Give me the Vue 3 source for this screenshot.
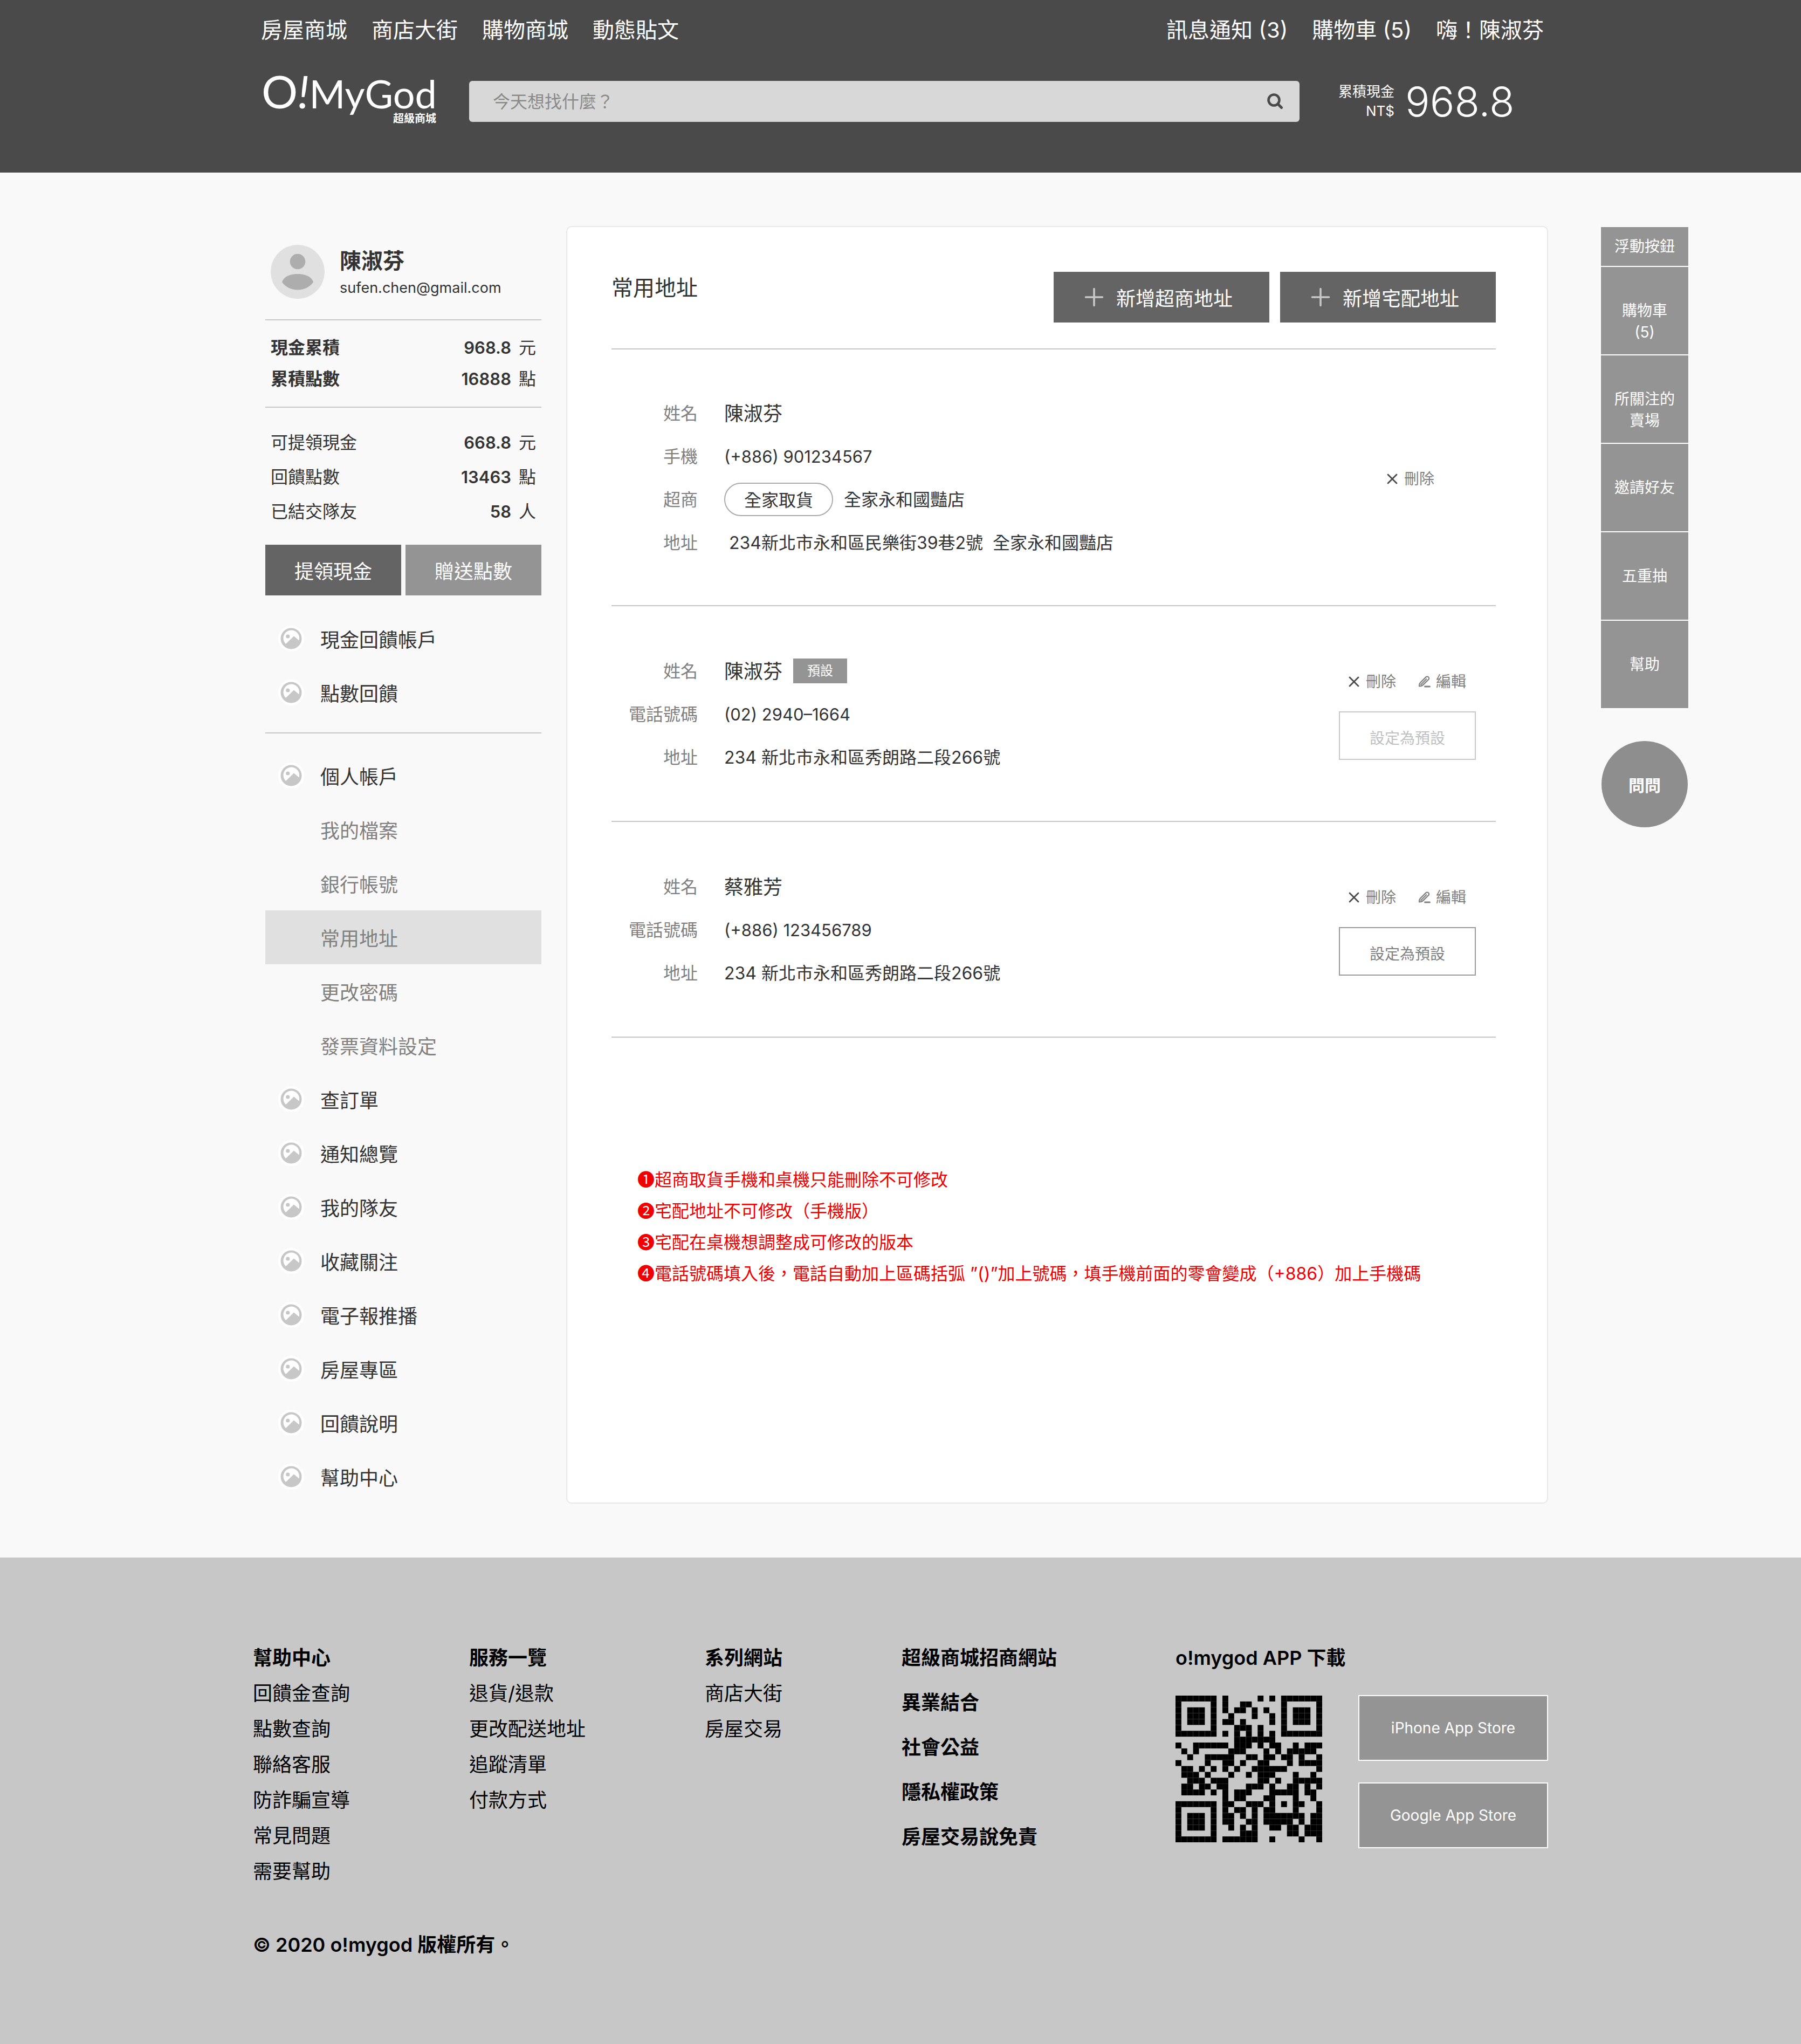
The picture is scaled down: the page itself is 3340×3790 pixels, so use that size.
<script setup>
const mainNav = ['房屋商城', '商店大街', '購物商城', '動態貼文']
const userNav = ['訊息通知 (3)', '購物車 (5)', '嗨！陳淑芬']

const totals = [
  { label: '現金累積', value: '968.8', unit: '元' },
  { label: '累積點數', value: '16888', unit: '點' },
]
const balances = [
  { label: '可提領現金', value: '668.8', unit: '元' },
  { label: '回饋點數', value: '13463', unit: '點' },
  { label: '已結交隊友', value: '58', unit: '人' },
]

const rewardMenu = ['現金回饋帳戶', '點數回饋']
const accountMenu = [
  { label: '個人帳戶' },
  { label: '我的檔案', sub: true },
  { label: '銀行帳號', sub: true },
  { label: '常用地址', sub: true, active: true },
  { label: '更改密碼', sub: true },
  { label: '發票資料設定', sub: true },
  { label: '查訂單' },
  { label: '通知總覽' },
  { label: '我的隊友' },
  { label: '收藏關注' },
  { label: '電子報推播' },
  { label: '房屋專區' },
  { label: '回饋說明' },
  { label: '幫助中心' },
]

const addresses = [
  {
    store: true,
    rows: [
      { label: '姓名', value: '陳淑芬', kind: 'name' },
      { label: '手機', value: '(+886) 901234567', kind: 'phone' },
      { label: '超商', pill: '全家取貨', value: '全家永和國豔店' },
      { label: '地址', value: ' 234新北市永和區民樂街39巷2號  全家永和國豔店' },
    ],
  },
  {
    isDefault: true,
    rows: [
      { label: '姓名', value: '陳淑芬', kind: 'name', tag: '預設' },
      { label: '電話號碼', value: '(02) 2940–1664', kind: 'phone' },
      { label: '地址', value: '234 新北市永和區秀朗路二段266號' },
    ],
  },
  {
    rows: [
      { label: '姓名', value: '蔡雅芳', kind: 'name' },
      { label: '電話號碼', value: '(+886) 123456789', kind: 'phone' },
      { label: '地址', value: '234 新北市永和區秀朗路二段266號' },
    ],
  },
]

const notes = [
  ['❶', '超商取貨手機和桌機只能刪除不可修改'],
  ['❷', '宅配地址不可修改（手機版）'],
  ['❸', '宅配在桌機想調整成可修改的版本'],
  ['❹', '電話號碼填入後，電話自動加上區碼括弧 ”()”加上號碼，填手機前面的零會變成（+886）加上手機碼'],
]

const rail = [['購物車', '(5)'], ['所關注的', '賣場'], ['邀請好友'], ['五重抽'], ['幫助']]

const footerLists = [
  { title: '幫助中心', items: ['回饋金查詢', '點數查詢', '聯絡客服', '防詐騙宣導', '常見問題', '需要幫助'] },
  { title: '服務一覽', items: ['退貨/退款', '更改配送地址', '追蹤清單', '付款方式'] },
  { title: '系列網站', items: ['商店大街', '房屋交易'] },
]
const footerLinks = ['超級商城招商網站', '異業結合', '社會公益', '隱私權政策', '房屋交易說免責']

// Dark modules of each QR row, written as column numbers and ranges
const qrRows = [
  '0-6 8 14 16 18-24',
  '0 6 8 11-12 18 24',
  '0 2-4 6 8 10-11 13 15 18 20-22 24',
  '0 2-4 6 9 13 16 18 20-22 24',
  '0 2-4 6 8-9 11 16 18 20-22 24',
  '0 6 10-12 14 18 24',
  '0-6 8 10 12 14 16 18-24',
  '10-16',
  '0 3-8 10-12 14 16-17 20 22-24',
  '1 3 9-11 15 17 19-23',
  '2 5-9 12-13 15-16 18-19 21 24',
  '0 5 8-9 11 14-15 19 21-24',
  '1-2 4 6 8 10 13-18 24',
  '1-3 5 9 12 14-16 20 23',
  '2-4 6-8 14-15 17 20-24',
  '1-2 4-5 7-8 12-14 16 19-20 22 24',
  '1-4 6 8 10-12 16-20 22-23',
  '8 10-11 15-16 20 23',
  '0-6 8-9 12-14 16 18 20-21 24',
  '0 6 8 10-11 13 15-16 20 24',
  '0 2-4 6 8-9 11 13 15-21 23-24',
  '0 2-4 6 8-9 12-13 15-19 21 23-24',
  '0 2-4 6 9 11 13 16-17 19-20 22-24',
  '0 6 11-13 19-20 22-24',
  '0-6 8-13 16 21 24',
]
const qrCells = qrRows.flatMap((row, y) =>
  row.split(' ').flatMap((run) => {
    const [from, to = from] = run.split('-').map(Number)
    return Array.from({ length: to - from + 1 }, (_, i) => ({ x: from + i, y }))
  }),
)
</script>

<template>
  <div class="page" lang="zh-Hant">
    <header class="header">
      <div class="container">
        <div class="topbar">
          <nav class="nav">
            <a v-for="item in mainNav" :key="item" href="#">{{ item }}</a>
          </nav>
          <nav class="nav">
            <a v-for="item in userNav" :key="item" href="#">{{ item }}</a>
          </nav>
        </div>
        <div class="brandbar">
          <a class="logo" href="#">
            <span class="wordmark"><span class="big">O</span><span class="bang">!</span>MyGod</span>
            <span class="tagline">超級商城</span>
          </a>
          <form class="search" role="search" @submit.prevent>
            <input type="search" aria-label="搜尋" placeholder="今天想找什麼？" />
            <button type="submit" aria-label="搜尋">
              <svg viewBox="0 0 30 30" width="30" height="30">
                <circle cx="12.5" cy="12.5" r="10" fill="none" stroke="#4a4a4a" stroke-width="4.6" />
                <path d="M20 20 L26.5 26.5" stroke="#4a4a4a" stroke-width="5" stroke-linecap="round" />
              </svg>
            </button>
          </form>
          <div class="cash">
            <div class="cash-label">累積現金<br />NT$</div>
            <div class="cash-value">968.8</div>
          </div>
        </div>
      </div>
    </header>

    <main class="main">
      <div class="content">
        <aside class="sidebar">
          <div class="profile">
            <svg class="avatar" viewBox="0 0 100 100">
              <circle cx="50" cy="50" r="50" fill="#e0e0e0" />
              <circle cx="50" cy="31" r="14.3" fill="#adadad" />
              <path d="M21 69 C24 59 36 54 50 54 C64 54 76 59 79 69 C73 78 62 83.500 50 83.500 C38 83.500 27 78 21 69 Z" fill="#adadad" />
            </svg>
            <div class="who">
              <div class="who-name">陳淑芬</div>
              <div class="who-mail">sufen.chen@gmail.com</div>
            </div>
          </div>
          <dl class="stats totals">
            <div v-for="row in totals" :key="row.label" class="stat">
              <dt>{{ row.label }}</dt>
              <dd><strong>{{ row.value }}</strong><span class="unit">{{ row.unit }}</span></dd>
            </div>
          </dl>
          <dl class="stats balances">
            <div v-for="row in balances" :key="row.label" class="stat">
              <dt>{{ row.label }}</dt>
              <dd><strong>{{ row.value }}</strong><span class="unit">{{ row.unit }}</span></dd>
            </div>
          </dl>
          <div class="quick">
            <button type="button" class="btn dark">提領現金</button>
            <button type="button" class="btn light">贈送點數</button>
          </div>
          <nav class="menu first">
            <a v-for="item in rewardMenu" :key="item" href="#">
              <svg class="thumb" viewBox="0 0 48 48">
                <circle cx="24" cy="24" r="24" fill="#fff" />
                <circle cx="24" cy="24" r="19.500" fill="#c7c7c7" />
                <path d="M14 34 A14.800 14.800 0 1 1 38.500 27.500 L29 19.500 Z" fill="#fff" />
                <circle cx="17.800" cy="20" r="3.600" fill="#c7c7c7" />
              </svg>
              {{ item }}
            </a>
          </nav>
          <nav class="menu">
            <a
              v-for="item in accountMenu"
              :key="item.label"
              href="#"
              :class="{ sub: item.sub, active: item.active }"
            >
              <svg v-if="!item.sub" class="thumb" viewBox="0 0 48 48">
                <circle cx="24" cy="24" r="24" fill="#fff" />
                <circle cx="24" cy="24" r="19.500" fill="#c7c7c7" />
                <path d="M14 34 A14.800 14.800 0 1 1 38.500 27.500 L29 19.500 Z" fill="#fff" />
                <circle cx="17.800" cy="20" r="3.600" fill="#c7c7c7" />
              </svg>
              {{ item.label }}
            </a>
          </nav>
        </aside>

        <section class="card">
          <div class="card-head">
            <h1>常用地址</h1>
            <div class="adders">
              <button v-for="label in ['新增超商地址', '新增宅配地址']" :key="label" type="button" class="btn dark add">
                <svg viewBox="0 0 36 36" width="36" height="36">
                  <path d="M18 2.500 V33.500 M2.500 18 H33.500" stroke="#c7c7c7" stroke-width="3.600" stroke-linecap="round" />
                </svg>
                {{ label }}
              </button>
            </div>
          </div>

          <article v-for="(address, i) in addresses" :key="i" class="record" :class="{ store: address.store }">
            <dl class="fields">
              <div v-for="row in address.rows" :key="row.label" class="field">
                <dt>{{ row.label }}</dt>
                <dd>
                  <span v-if="row.pill" class="pill">{{ row.pill }}</span>
                  <span class="value" :class="row.kind">{{ row.value }}</span>
                  <span v-if="row.tag" class="tag">{{ row.tag }}</span>
                </dd>
              </div>
            </dl>
            <div class="actions">
              <div class="links">
                <a href="#">
                  <svg viewBox="0 0 20 20" width="20" height="20">
                    <path d="M2 2 L18 18 M18 2 L2 18" stroke="#4a4a4a" stroke-width="2.800" stroke-linecap="round" />
                  </svg>
                  刪除
                </a>
                <a v-if="!address.store" href="#" class="edit">
                  <svg viewBox="0 0 24 24" width="24" height="24" fill="none" stroke="#808080">
                    <path
                      d="M3 20.500 C2.800 17 3.200 15.600 5 13.800 L15.200 3.600 C16.600 2.200 18.800 2.200 20.100 3.500 C21.400 4.800 21.400 6.900 20 8.300 L9.600 18.400 C7.800 20.100 6.500 20.500 3 20.500 Z M5.500 18 L17 6.500"
                      stroke-width="2.200"
                      stroke-linejoin="round"
                    />
                    <path d="M13.500 21 H22.500" stroke-width="2.800" stroke-linecap="round" />
                  </svg>
                  編輯
                </a>
              </div>
              <button v-if="!address.store" type="button" class="set-default" :disabled="address.isDefault">設定為預設</button>
            </div>
          </article>

          <ul class="notes">
            <li v-for="[mark, text] in notes" :key="mark"><span class="mark">{{ mark }}</span>{{ text }}</li>
          </ul>
        </section>
      </div>

      <aside class="floating">
        <div class="rail">
          <div class="rail-title">浮動按鈕</div>
          <a v-for="lines in rail" :key="lines[0]" href="#">
            <span v-for="line in lines" :key="line">{{ line }}</span>
          </a>
        </div>
        <button type="button" class="ask">問問</button>
      </aside>
    </main>

    <footer class="footer">
      <div class="container">
        <div class="footer-grid">
          <div v-for="list in footerLists" :key="list.title">
            <h2>{{ list.title }}</h2>
            <ul>
              <li v-for="item in list.items" :key="item"><a href="#">{{ item }}</a></li>
            </ul>
          </div>
          <ul class="strong-links">
            <li v-for="item in footerLinks" :key="item"><a href="#">{{ item }}</a></li>
          </ul>
          <div>
            <h2>o!mygod APP 下載</h2>
            <div class="download">
              <svg class="qr" viewBox="0 0 25 25" role="img" aria-label="QR code">
                <rect v-for="cell in qrCells" :key="`${cell.x}-${cell.y}`" :x="cell.x" :y="cell.y" width="1" height="1" />
              </svg>
              <div class="stores">
                <a href="#">iPhone App Store</a>
                <a href="#">Google App Store</a>
              </div>
            </div>
          </div>
        </div>
        <p class="copyright">© 2020 o!mygod 版權所有。</p>
      </div>
    </footer>
  </div>
</template>

<style>
body {
  margin: 0;
  background: #f9f9f9;
}
</style>

<style scoped>
.page {
  font-family: Inter, 'Noto Sans CJK TC', sans-serif;
  font-size: 32px;
  color: #333;
  background: #f9f9f9;
}
.page * {
  box-sizing: border-box;
}
a {
  color: inherit;
  text-decoration: none;
}
ul,
dl,
dd,
h1,
h2,
p {
  margin: 0;
  padding: 0;
}
ul {
  list-style: none;
}
button,
input {
  font: inherit;
  border: 0;
  padding: 0;
  border-radius: 0;
  appearance: none;
}
svg {
  display: block;
  flex: none;
}
.container {
  max-width: 2402px;
  margin: 0 auto;
}

/* Header */
.header {
  background: #4a4a4a;
  color: #fff;
  padding: 32px 0 76px;
}
.topbar {
  display: flex;
  justify-content: space-between;
  padding: 0 8px 0 15px;
  font-size: 40px;
  line-height: 48px;
}
.nav {
  display: flex;
  gap: 45px;
}
.brandbar {
  display: flex;
  align-items: center;
  height: 112px;
  margin-top: 52px;
  padding-left: 16px;
}
.logo {
  width: 324px;
  margin: 0 61px 20px 0;
}
.wordmark {
  display: block;
  font-family: Lato, sans-serif;
  font-size: 72px;
  line-height: 84px;
  white-space: nowrap;
}
.big {
  font-size: 84px;
}
.bang {
  font-size: 84px;
  font-style: italic;
}
.tagline {
  display: block;
  margin-top: -5px;
  font-size: 20px;
  font-weight: 700;
  line-height: 20px;
  text-align: right;
}
.search {
  display: flex;
  flex: 1;
  align-items: center;
  height: 76px;
  padding: 0 30px 0 44px;
  background: #d8d8d8;
  border-radius: 6px;
}
.search input {
  flex: 1;
  min-width: 0;
  height: 76px;
  background: none;
  outline: none;
}
.search input::placeholder {
  color: #8a8a8a;
  opacity: 1;
}
.search button {
  background: none;
}
.cash {
  display: flex;
  align-items: center;
  width: 389px;
  margin-left: 72px;
  gap: 20px;
}
.cash-label {
  font-size: 26px;
  line-height: 36px;
  text-align: right;
}
.cash-value {
  font-size: 76px;
  font-weight: 300;
  line-height: 80px;
}

/* Main */
.main {
  display: grid;
  grid-template-columns: 1fr minmax(0, 2402px) 1fr;
  padding: 99px 0 100px;
}
.content {
  display: flex;
  grid-column: 2;
  gap: 46px;
  padding-left: 23px;
}
.sidebar {
  width: 512px;
  flex: none;
}
.profile {
  display: flex;
  align-items: center;
  gap: 28px;
  padding: 35px 10px 38px;
}
.avatar {
  width: 100px;
  height: 100px;
}
.who {
  display: flex;
  flex-direction: column;
  gap: 6px;
  padding-top: 6px;
}
.who-name {
  font-size: 40px;
  font-weight: 600;
  line-height: 48px;
}
.who-mail {
  font-size: 27px;
  line-height: 40px;
}
.stats {
  border-top: 2px solid #c7c7c7;
}
.totals {
  padding: 22px 10px;
}
.totals .stat {
  line-height: 58px;
}
.totals dt {
  font-weight: 600;
}
.balances {
  padding: 33px 10px 29px;
}
.balances .stat {
  line-height: 64px;
}
.stat {
  display: flex;
  justify-content: space-between;
}
.stat strong {
  font-size: 31px;
  font-weight: 600;
}
.unit {
  margin-left: 14px;
}
.quick {
  display: flex;
  gap: 8px;
}
.quick .btn {
  flex: 1;
}
.btn {
  height: 94px;
  color: #fff;
  font-size: 36px;
}
.dark {
  background: #646464;
}
.light {
  background: #949494;
}
.menu a {
  display: flex;
  align-items: center;
  height: 100px;
  padding-left: 24px;
  font-size: 36px;
}
.menu a.sub {
  padding-left: 102px;
  color: #808080;
}
.menu a.active {
  background: #e0e0e0;
}
.menu.first {
  margin-top: 30px;
  padding-bottom: 24px;
  margin-bottom: 28px;
  border-bottom: 2px solid #c7c7c7;
}
.thumb {
  width: 48px;
  height: 48px;
  margin-right: 30px;
}

/* Address card */
.card {
  flex: 1;
  min-width: 0;
  padding: 83px 95px 83px 82px;
  background: #fff;
  border: 2px solid #e8e8e8;
  border-radius: 10px;
}
.card-head {
  display: flex;
  justify-content: space-between;
  padding-bottom: 48px;
  border-bottom: 2px solid #c7c7c7;
}
.card-head h1 {
  font-size: 40px;
  font-weight: 400;
  line-height: 60px;
}
.adders {
  display: flex;
  gap: 20px;
}
.add {
  display: flex;
  align-items: center;
  width: 400px;
  padding-left: 57px;
  gap: 23px;
}
.record {
  display: flex;
  justify-content: space-between;
  align-items: center;
  padding: 78px 0 80px;
  border-bottom: 2px solid #c7c7c7;
}
.record.store {
  padding: 76px 0 78px;
}
.field {
  display: flex;
  align-items: center;
  height: 80px;
}
.field dt {
  width: 160px;
  color: #808080;
  text-align: right;
}
.field dd {
  display: flex;
  align-items: center;
  gap: 20px;
  margin-left: 49px;
}
.value {
  white-space: pre;
}
.name {
  font-size: 36px;
}
.phone {
  padding-top: 4px;
  font-size: 31px;
}
.pill,
.tag {
  margin-top: 4px;
  text-align: center;
}
.pill {
  width: 202px;
  height: 62px;
  border: 2px solid #aaa;
  border-radius: 31px;
  line-height: 61px;
}
.tag {
  width: 100px;
  height: 46px;
  background: #949494;
  color: #fff;
  font-size: 24px;
  line-height: 46px;
}
.actions {
  display: flex;
  flex-direction: column;
  align-items: center;
  gap: 35px;
  width: 328px;
  padding-top: 8px;
  font-size: 28px;
}
.store .actions {
  padding-left: 12px;
}
.links {
  display: flex;
  gap: 40px;
  color: #808080;
  line-height: 40px;
}
.links a {
  display: flex;
  align-items: center;
  gap: 12px;
}
.links a.edit {
  gap: 10px;
}
.set-default {
  width: 254px;
  height: 90px;
  padding-top: 6px;
  border: 2px solid #999;
  background: #fff;
  color: #808080;
}
.set-default:disabled {
  border-color: #c7c7c7;
  color: #c0c0c0;
}
.notes {
  margin-top: 235px;
  padding-left: 48px;
  color: #f00000;
  line-height: 58px;
}
.mark {
  font-family: 'Noto Sans CJK TC', sans-serif;
  line-height: 1;
}

/* Floating buttons */
.floating {
  margin-left: 96px;
}
.rail {
  display: flex;
  flex-direction: column;
  gap: 2px;
  width: 166px;
  border: 2px solid #fff;
  background: #fff;
  color: #fff;
  font-size: 28px;
  line-height: 40px;
  text-align: center;
}
.rail-title {
  padding: 16px 0;
  background: #949494;
}
.rail a {
  height: 162px;
  padding-top: 61px;
  background: #949494;
}
.rail span {
  display: block;
}
.ask {
  width: 160px;
  height: 160px;
  margin: 59px 3px 0;
  border-radius: 50%;
  background: #8e8e8e;
  color: #fff;
  font-size: 30px;
  font-weight: 600;
}

/* Footer */
.footer {
  padding: 153px 0 151px;
  background: #c7c7c7;
  color: #000;
  font-size: 36px;
  line-height: 66px;
}
.footer-grid {
  display: grid;
  grid-template-columns: 401fr 437fr 365fr 508fr 691fr;
}
.footer h2 {
  font-size: 36px;
  font-weight: 600;
}
.strong-links {
  display: flex;
  flex-direction: column;
  gap: 17px;
  font-weight: 600;
}
.download {
  display: flex;
  justify-content: space-between;
  margin-top: 36px;
}
.qr {
  width: 272px;
  height: 272px;
  margin-top: 1px;
}
.stores {
  display: flex;
  flex-direction: column;
  gap: 40px;
  width: 352px;
}
.stores a {
  height: 122px;
  border: 2px solid #fff;
  background: #949494;
  color: #fff;
  font-size: 28px;
  line-height: 118px;
  text-align: center;
}
.copyright {
  margin-top: 70px;
  font-weight: 600;
}
</style>
